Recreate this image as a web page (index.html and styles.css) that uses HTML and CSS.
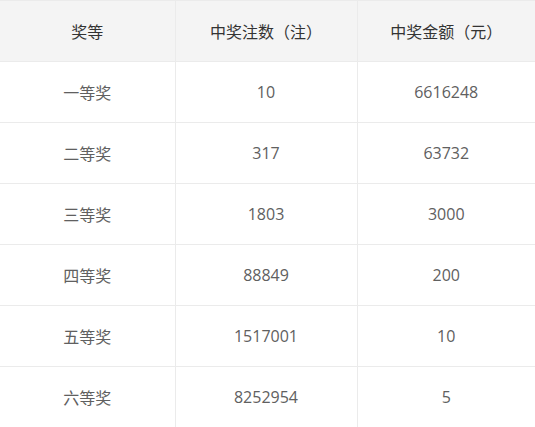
FILE: index.html
```html
<!DOCTYPE html>
<html lang="zh-CN">
<head>
<meta charset="utf-8">
<link rel="stylesheet" href="styles.css">
</head>
<body>
<table class="prize-table">
  <colgroup>
    <col class="c1"><col class="c2"><col class="c3">
  </colgroup>
  <thead>
    <tr><th>奖等</th><th>中奖注数（注）</th><th>中奖金额（元）</th></tr>
  </thead>
  <tbody>
    <tr><td>一等奖</td><td>10</td><td>6616248</td></tr>
    <tr><td>二等奖</td><td>317</td><td>63732</td></tr>
    <tr><td>三等奖</td><td>1803</td><td>3000</td></tr>
    <tr><td>四等奖</td><td>88849</td><td>200</td></tr>
    <tr><td>五等奖</td><td>1517001</td><td>10</td></tr>
    <tr><td>六等奖</td><td>8252954</td><td>5</td></tr>
  </tbody>
</table>
</body>
</html>
```
FILE: styles.css
```css
html, body {
  margin: 0;
  padding: 0;
  background: #fff;
}
body {
  font-family: "Open Sans", "Noto Sans CJK SC", sans-serif;
  font-size: 16px;
}
.prize-table {
  width: 535px;
  border-collapse: collapse;
  table-layout: fixed;
  border-top: 1px solid #ebebeb;
}
.c1 { width: 175px; }
.c2 { width: 182px; }
.c3 { width: 178px; }
.prize-table th,
.prize-table td {
  height: 61px;
  padding: 0;
  text-align: center;
  vertical-align: middle;
  border-bottom: 1px solid #ebebeb;
  border-left: 1px solid #ebebeb;
  box-sizing: border-box;
}
.prize-table th:first-child,
.prize-table td:first-child {
  border-left: none;
}
.prize-table th {
  background: #f4f4f4;
  color: #333;
  font-weight: normal;
}
.prize-table td {
  color: #606060;
}
```
